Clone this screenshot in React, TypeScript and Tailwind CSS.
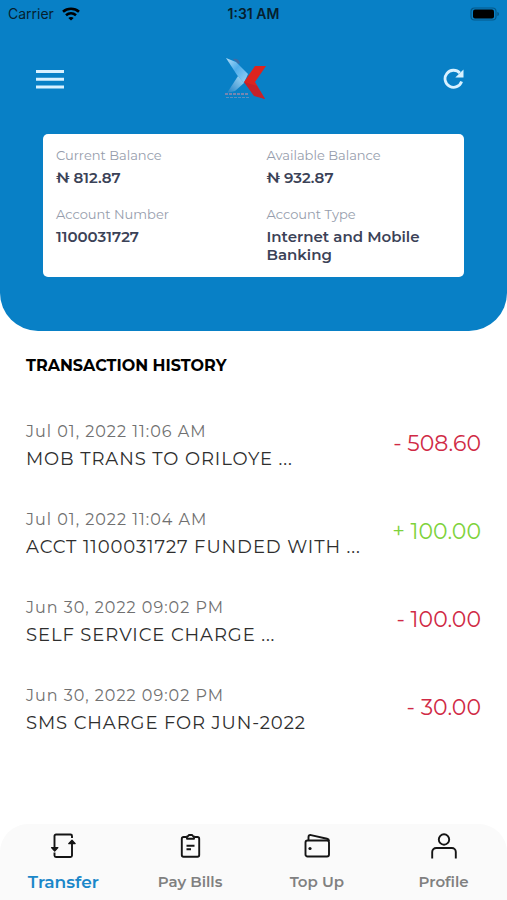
import type { ReactNode } from "react";

type Transaction = { id: number; date: string; text: string; amount: string; credit?: boolean };

const transactions: Transaction[] = [
  { id: 1, date: "Jul 01, 2022 11:06 AM", text: "MOB TRANS TO ORILOYE ...", amount: "- 508.60" },
  { id: 2, date: "Jul 01, 2022 11:04 AM", text: "ACCT 1100031727 FUNDED WITH ...", amount: "+ 100.00", credit: true },
  { id: 3, date: "Jun 30, 2022 09:02 PM", text: "SELF SERVICE CHARGE ...", amount: "- 100.00" },
  { id: 4, date: "Jun 30, 2022 09:02 PM", text: "SMS CHARGE FOR JUN-2022", amount: "- 30.00" },
];

const account = [
  { label: "Current Balance", value: "₦ 812.87" },
  { label: "Available Balance", value: "₦ 932.87" },
  { label: "Account Number", value: "1100031727" },
  { label: "Account Type", value: "Internet and Mobile Banking" },
];

function StatusBar() {
  return (
    <div className="grid h-7 grid-cols-3 items-center px-2 font-['Inter',sans-serif] text-sm text-[#06202f]">
      <div className="flex items-center gap-2">
        <span>Carrier</span>
        <svg width="18" height="14" viewBox="0 0 18 14" fill="none" stroke="#000" strokeWidth="2.6" aria-hidden="true">
          <path d="M1 4.800C5.500.800 12.500.800 17 4.800" />
          <path d="M4 8.300c3-2.600 7-2.600 10 0" />
          <path d="M9 13.600 6.300 10.900c1.500-1.300 3.900-1.300 5.400 0Z" fill="#000" stroke="none" />
        </svg>
      </div>
      <span className="text-center font-semibold">1:31 AM</span>
      <svg className="justify-self-end" width="30" height="14" viewBox="0 0 30 14" aria-hidden="true">
        <rect x="2" y="1" width="25" height="12" rx="3.500" fill="none" stroke="#05598a" strokeWidth="1.200" />
        <rect x="4" y="2.500" width="21" height="9" rx="2" fill="#000" />
        <path d="M28.300 5v4c1.300-.4 1.700-1.200 1.700-2s-.4-1.600-1.700-2Z" fill="#05598a" />
      </svg>
    </div>
  );
}

function Logo() {
  return (
    <svg width="44" height="44" viewBox="0 0 44 44" role="img" aria-label="Bank logo">
      <defs>
        <linearGradient id="wing" x1="0" y1="0" x2="1" y2="1">
          <stop offset="0" stopColor="#b5def7" />
          <stop offset="0.450" stopColor="#4fadea" />
          <stop offset="1" stopColor="#9ad3f6" />
        </linearGradient>
        <linearGradient id="leg" x1="1" y1="0" x2="0" y2="1">
          <stop offset="0" stopColor="#a9dcf8" />
          <stop offset="1" stopColor="#1d7fc4" />
        </linearGradient>
      </defs>
      <path d="M9 2c3-1 6 0 7 4l-2 1Z" fill="#3c6ca6" />
      <path d="M2 1 12 5 24 17 20 26 13 18Z" fill="url(#wing)" />
      <path d="M14 19 20 26 11 34 3 36Z" fill="url(#leg)" />
      <path d="M31 9H42L31 25 41 42 30 38 20 25Z" fill="#dc241f" />
      <path d="M20 25 30 39 41 42 33 29Z" fill="#c4222a" />
      <path d="M1 37h23" stroke="#7686b0" strokeWidth="2" strokeDasharray="3 1" />
      <path d="M2 40.500h24" stroke="#5c8fc0" strokeWidth="1" strokeDasharray="3 1" />
    </svg>
  );
}

function NavIcon({ children }: { children: ReactNode }) {
  return (
    <svg
      width="26"
      height="26"
      viewBox="0 0 26 26"
      fill="none"
      stroke="#141414"
      strokeWidth="1.900"
      strokeLinejoin="round"
      aria-hidden="true"
    >
      {children}
    </svg>
  );
}

const tabs = [
  {
    name: "Transfer",
    icon: (
      <NavIcon>
        <path d="M4.500 14V3a1.500 1.500 0 0 1 1.500-1.500h14.500a1.500 1.500 0 0 1 1.500 1.500V5" />
        <path d="M22 10v12.500a1.500 1.500 0 0 1-1.500 1.500H6a1.500 1.500 0 0 1-1.500-1.500V19.500" />
        <path d="M1.500 14.600h6.400L4.700 18Z M18.700 10.600H25.200L22 7.200Z" fill="#141414" strokeWidth="1.200" />
      </NavIcon>
    ),
  },
  {
    name: "Pay Bills",
    icon: (
      <NavIcon>
        <path d="M9.500 4H6.500a1.700 1.700 0 0 0-1.700 1.700v16.400a1.700 1.700 0 0 0 1.700 1.700h14a1.700 1.700 0 0 0 1.700-1.700V5.700A1.700 1.700 0 0 0 20.500 4h-3" />
        <path d="M10 3.500c.5 0 1-.3 1.300-.8a1.500 1.500 0 0 1 1.200-.7h2c.5 0 1 .3 1.200.7.300.5.800.8 1.300.8v2.300h-7Z" />
        <path d="M9.500 12.700h8M9.500 16.300h4.500" />
      </NavIcon>
    ),
  },
  {
    name: "Top Up",
    icon: (
      <NavIcon>
        <rect x="1.500" y="7.500" width="23.500" height="16" rx="2" />
        <path d="M4.500 7.500V4C4.500 2.500 5.500 1.800 7 2.100L23 5.800c1.300.3 2 .9 2 2.200" />
        <circle cx="6" cy="15.500" r="1.600" fill="#141414" stroke="none" />
      </NavIcon>
    ),
  },
  {
    name: "Profile",
    icon: (
      <NavIcon>
        <circle cx="13" cy="6.500" r="5.200" />
        <path d="M1.200 25.500V19a4 4 0 0 1 4-4h15.600a4 4 0 0 1 4 4v6.500" />
      </NavIcon>
    ),
  },
];

export default function App() {
  return (
    <div className="flex min-h-screen flex-col bg-white font-['Montserrat','Inter',sans-serif]">
      <header className="rounded-b-[38px] bg-[#0880c6] pb-[54px]">
        <StatusBar />
        <div className="flex items-center justify-between px-9 pt-7">
          <button type="button" aria-label="Menu" className="flex h-[46px] w-7 items-center">
            <svg width="28" height="20" viewBox="0 0 28 20" stroke="#d8f1ff" strokeWidth="3" aria-hidden="true">
              <path d="M0 2.500h28M0 10.300h28M0 18h28" />
            </svg>
          </button>
          <Logo />
          <button type="button" aria-label="Refresh" className="flex h-[46px] w-11 items-center justify-end pr-1.5">
            <svg width="22" height="22" viewBox="0 0 22 22" fill="none" stroke="#d8f1ff" strokeWidth="2.800" aria-hidden="true">
              <path d="M16.800 5A8.500 8.500 0 1 0 18.600 13.500" />
              <path d="M20.500 1.500V9.500H12.300Z" fill="#d8f1ff" stroke="none" />
            </svg>
          </button>
        </div>
        <dl className="mx-[43px] mt-8 grid grid-cols-2 gap-y-[18px] rounded-[5px] bg-white pt-3 pb-[13px] leading-[18px]">
          {account.map(({ label, value }) => (
            <div key={label} className="px-[13px]">
              <dt className="text-[13px] leading-[18px] text-[#969dac]">{label}</dt>
              <dd className="mt-[5px] text-[15px] leading-[18px] font-semibold text-[#3b4257]">{value}</dd>
            </div>
          ))}
        </dl>
      </header>

      <main className="px-[26px] pt-[23px] pb-8">
        <h1 className="text-base leading-6 font-bold text-black">TRANSACTION HISTORY</h1>
        <ul className="mt-[42px] flex flex-col gap-[34px]">
          {transactions.map((t) => (
            <li key={t.id} className="flex justify-between">
              <div>
                <p className="text-base leading-6 tracking-[1px] text-[#707070]">{t.date}</p>
                <p className="text-lg leading-[30px] tracking-wider text-[#2e2e2e]">{t.text}</p>
              </div>
              <p
                className={`text-[22px] leading-[48px] whitespace-nowrap ${t.credit ? "text-[#7ed23c]" : "text-[#d02a45]"}`}
              >
                {t.amount}
              </p>
            </li>
          ))}
        </ul>
      </main>

      <nav className="mt-auto grid grid-cols-4 rounded-t-[28px] bg-[#fafafa] pt-[9px] pb-2">
        {tabs.map(({ name, icon }, i) => (
          <a
            key={name}
            href={`#${name.toLowerCase().replace(" ", "-")}`}
            aria-current={i === 0 ? "page" : undefined}
            className={`flex flex-col items-center gap-[13px] leading-5 font-semibold ${i === 0 ? "text-[17px] text-[#1a87c9]" : "text-[15px] text-[#808080]"}`}
          >
            {icon}
            <span className="leading-5">{name}</span>
          </a>
        ))}
      </nav>
    </div>
  );
}
